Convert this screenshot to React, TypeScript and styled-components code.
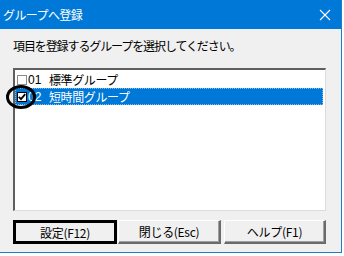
import React from "react";
import styled, { createGlobalStyle } from "styled-components";

const Global = createGlobalStyle`
  html, body { margin: 0; padding: 0; background: #ffffff; }
  body { font-family: "Liberation Sans", "Noto Sans CJK JP", sans-serif; }
`;

const Window = styled.div`
  width: 342px;
  height: 253px;
  box-sizing: border-box;
  border-right: 1px solid #1a7fc8;
  border-bottom: 1px solid #1a7fc8;
  display: flex;
  flex-direction: column;
  position: relative;
  background: #f0f0f0;
`;

const TitleBar = styled.div`
  height: 29px;
  flex: none;
  background: #0078d7;
  display: flex;
  align-items: center;
  justify-content: space-between;
  padding: 0 10px 0 3px;
  color: #ffffff;
  font-family: "Noto Sans CJK JP", sans-serif;
  font-size: 12px;
  letter-spacing: -0.6px;
`;

const CloseIcon = styled.svg`
  width: 12px;
  height: 12px;
  display: block;
`;

const Body = styled.div`
  flex: 1;
  display: flex;
  flex-direction: column;
  padding: 9px 15px 0 13px;
`;

const Prompt = styled.div`
  font-family: "Noto Sans CJK JP", sans-serif;
  font-size: 12px;
  line-height: 16px;
  letter-spacing: -1.1px;
  color: #000;
  margin-bottom: 14px;
`;

const ListBox = styled.div`
  height: 143px;
  box-sizing: border-box;
  background: #ffffff;
  border-top: 2px solid #5f5f5f;
  border-left: 2px solid #5f5f5f;
  border-right: 1px solid #dcdcdc;
  border-bottom: 1px solid #dcdcdc;
  padding: 1px 2px 0 0;
  display: flex;
  flex-direction: column;
`;

const Row = styled.div<{ $selected?: boolean }>`
  height: 17px;
  display: flex;
  align-items: center;
  background: ${(p) => (p.$selected ? "#0078d7" : "transparent")};
  color: ${(p) => (p.$selected ? "#ffffff" : "#000000")};
  outline: ${(p) => (p.$selected ? "1px dotted #7fb9ea" : "none")};
  outline-offset: -1px;
  font-size: 12px;
  padding-left: 2px;
`;

const Box = styled.span<{ $checked?: boolean }>`
  width: 10px;
  height: 10px;
  box-sizing: border-box;
  background: #ffffff;
  border: 1px solid ${(p) => (p.$checked ? "#000" : "#8a8a8a")};
  display: flex;
  align-items: center;
  justify-content: center;
  margin-right: 1px;
`;

const Code = styled.span`
  font-family: "Liberation Sans", sans-serif;
  font-size: 12px;
  width: 21px;
`;

const Name = styled.span`
  font-family: "Noto Sans CJK JP", sans-serif;
  font-size: 12px;
  letter-spacing: -0.4px;
`;

const Circle = styled.div`
  position: absolute;
  left: 6px;
  top: 85px;
  width: 30px;
  height: 24px;
  box-sizing: border-box;
  border: 3px solid #000;
  border-radius: 50%;
  pointer-events: none;
`;

const Buttons = styled.div`
  display: flex;
  margin-top: 9px;
  height: 24px;
`;

const Button = styled.div<{ $w: number; $focused?: boolean; $gap: number }>`
  width: ${(p) => p.$w}px;
  margin-left: ${(p) => p.$gap}px;
  box-sizing: border-box;
  background: #f0f0f0;
  display: flex;
  align-items: center;
  justify-content: center;
  font-family: "Noto Sans CJK JP", sans-serif;
  font-size: 12px;
  letter-spacing: -0.3px;
  color: #000;
  border-style: solid;
  border-width: ${(p) => (p.$focused ? "3px" : "1px 2px 2px 1px")};
  border-color: ${(p) =>
    p.$focused ? "#000" : "#ffffff #6b6b6b #6b6b6b #ffffff"};
  box-shadow: ${(p) => (p.$focused ? "none" : "inset -1px -1px 0 #a0a0a0")};
`;

export default function App() {
  return (
    <>
      <Global />
      <Window>
        <TitleBar>
          <span>グループへ登録</span>
          <CloseIcon viewBox="0 0 12 12">
            <path d="M1 1 L11 11 M11 1 L1 11" stroke="#fff" strokeWidth="1.1" />
          </CloseIcon>
        </TitleBar>
        <Body>
          <Prompt>項目を登録するグループを選択してください。</Prompt>
          <ListBox>
            <Row>
              <Box />
              <Code>01</Code>
              <Name>標準グループ</Name>
            </Row>
            <Row $selected>
              <Box $checked>
                <svg width="8" height="8" viewBox="0 0 8 8">
                  <path d="M0.8 3.8 L3 6.2 L7.2 1.2" stroke="#000" strokeWidth="1.8" fill="none" />
                </svg>
              </Box>
              <Code>02</Code>
              <Name>短時間グループ</Name>
            </Row>
          </ListBox>
          <Buttons>
            <Button $w={104} $gap={0} $focused>設定(F12)</Button>
            <Button $w={103} $gap={1}>閉じる(Esc)</Button>
            <Button $w={102} $gap={3}>ヘルプ(F1)</Button>
          </Buttons>
        </Body>
        <Circle />
      </Window>
    </>
  );
}
